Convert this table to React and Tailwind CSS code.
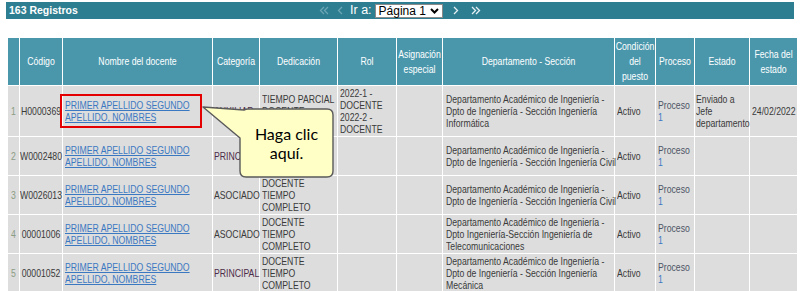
import React from "react";

const LINK = "#3b78c2";

const headers = [
  [""],
  ["Código"],
  ["Nombre del docente"],
  ["Categoría"],
  ["Dedicación"],
  ["Rol"],
  ["Asignación", "especial"],
  ["Departamento - Sección"],
  ["Condición", "del", "puesto"],
  ["Proceso"],
  ["Estado"],
  ["Fecha del", "estado"],
];

const colWidths = [
  "w-[12px]",
  "w-[43px]",
  "w-[150px]",
  "w-[47px]",
  "w-[78px]",
  "w-[59px]",
  "w-[46px]",
  "w-[172px]",
  "w-[41px]",
  "w-[39px]",
  "w-[55px]",
  "w-[48px]",
];

const DEPT = "Departamento Académico de Ingeniería -";

const rows = [
  {
    n: 1,
    code: "H0000369",
    cat: "AUXILIAR",
    catTone: true,
    ded: ["TIEMPO PARCIAL", "DOCENTE", "POR HORAS"],
    rol: ["2022-1 -", "DOCENTE", "2022-2 -", "DOCENTE"],
    dept: [DEPT, "Dpto de Ingeniería - Sección Ingeniería", "Informática"],
    estado: ["Enviado a", "Jefe", "departamento"],
    fecha: "24/02/2022",
  },
  {
    n: 2,
    code: "W0002480",
    cat: "PRINCIPAL",
    catTone: true,
    ded: ["DOCENTE", "TIEMPO", "COMPLETO"],
    rol: [],
    dept: [DEPT, "Dpto de Ingeniería - Sección Ingeniería Civil"],
    estado: [],
    fecha: "",
  },
  {
    n: 3,
    code: "W0026013",
    cat: "ASOCIADO",
    catTone: false,
    ded: ["DOCENTE", "TIEMPO", "COMPLETO"],
    rol: [],
    dept: [DEPT, "Dpto de Ingeniería - Sección Ingeniería Civil"],
    estado: [],
    fecha: "",
  },
  {
    n: 4,
    code: "00001006",
    cat: "ASOCIADO",
    catTone: false,
    ded: ["DOCENTE", "TIEMPO", "COMPLETO"],
    rol: [],
    dept: [DEPT, "Dpto Ingeniería-Sección Ingeniería de", "Telecomunicaciones"],
    estado: [],
    fecha: "",
  },
  {
    n: 5,
    code: "00001052",
    cat: "PRINCIPAL",
    catTone: true,
    ded: ["DOCENTE", "TIEMPO", "COMPLETO"],
    rol: [],
    dept: [DEPT, "Dpto de Ingeniería - Sección Ingeniería", "Mecánica"],
    estado: [],
    fecha: "",
  },
];

function Lines({ items }) {
  return items.map((t, i) => (
    <React.Fragment key={i}>
      {i > 0 && <br />}
      {t}
    </React.Fragment>
  ));
}

// The grid uses a condensed face: glyphs are narrowed horizontally.
function NarrowLeft({ children, className = "" }) {
  return (
    <span className={`block origin-left scale-x-[0.79] whitespace-nowrap ${className}`}>
      {children}
    </span>
  );
}

function NarrowCenter({ children, className = "" }) {
  return (
    <div className={`flex origin-center scale-x-[0.79] justify-center ${className}`}>
      <span className="whitespace-nowrap">{children}</span>
    </div>
  );
}

function Chevron({ dir = "left", double = false, color }) {
  const d = dir === "left" ? "M5 1 L1.5 4.5 L5 8" : "M1 1 L4.5 4.5 L1 8";
  return (
    <svg width={double ? 10 : 6} height="9" viewBox={`0 0 ${double ? 10 : 6} 9`} fill="none">
      <path d={d} stroke={color} strokeWidth="1.3" />
      {double && <path d={d} transform="translate(4 0)" stroke={color} strokeWidth="1.3" />}
    </svg>
  );
}

const td = "border border-white bg-[#dddddd] px-[2px] py-px align-middle";

export default function App() {
  return (
    <div className="relative min-h-[291px] bg-white px-[6px] pt-[2px] font-['Liberation_Sans',Arial,sans-serif] text-[11px] leading-[12px] text-[#3a3a3a]">
      {/* results bar with pager */}
      <div className="grid h-[17px] grid-cols-[1fr_auto_1fr] items-center bg-[#2e7e91] text-white">
        <span className="pl-[3px] text-[10.5px] font-bold leading-none">163 Registros</span>
        <div className="flex items-center text-[12.5px] leading-none">
          <Chevron dir="left" double color="#6aa6b6" />
          <span className="ml-[8px]">
            <Chevron dir="left" color="#6aa6b6" />
          </span>
          <span className="ml-[7px]">Ir a:</span>
          <div className="ml-[3px] flex h-[14px] items-center gap-[4px] whitespace-nowrap border border-[#8a8a8a] bg-white px-[3px] text-[12px] text-black">
            <span>Página 1</span>
            <svg width="9" height="6" viewBox="0 0 9 6" fill="none">
              <path d="M1 1 L4.5 4.5 L8 1" stroke="#000" strokeWidth="2" />
            </svg>
          </div>
          <span className="ml-[10px]">
            <Chevron dir="right" color="#e4f0f3" />
          </span>
          <span className="ml-[12px]">
            <Chevron dir="right" double color="#e4f0f3" />
          </span>
        </div>
        <span />
      </div>

      <table className="mx-px mt-[18px] w-[790px] table-fixed border-collapse">
        <colgroup>
          {colWidths.map((w, i) => (
            <col key={i} className={w} />
          ))}
        </colgroup>
        <thead>
          <tr>
            {headers.map((h, i) => (
              <th
                key={i}
                className="h-[47px] border border-white bg-[#4a97ac] px-0 py-px text-center align-middle font-normal leading-[15px] text-white"
              >
                <NarrowCenter>
                  <Lines items={h} />
                </NarrowCenter>
              </th>
            ))}
          </tr>
        </thead>
        <tbody>
          {rows.map((r) => (
            <tr key={r.n}>
              <td className={`${td} text-[#8c9c84]`}>
                <NarrowCenter>{r.n}</NarrowCenter>
              </td>
              <td className={td}>
                <NarrowCenter>{r.code}</NarrowCenter>
              </td>
              <td className={td}>
                <NarrowLeft>
                  <a href="#" className="text-[#3b78c2] underline underline-offset-1">
                    PRIMER APELLIDO SEGUNDO
                    <br />
                    APELLIDO, NOMBRES
                  </a>
                </NarrowLeft>
              </td>
              <td className={`${td} px-px`}>
                <NarrowLeft className={r.catTone ? "text-[#4d2c4a]" : ""}>{r.cat}</NarrowLeft>
              </td>
              <td className={td}>
                <NarrowLeft>
                  <Lines items={r.ded} />
                </NarrowLeft>
              </td>
              <td className={td}>
                <NarrowLeft>
                  <Lines items={r.rol} />
                </NarrowLeft>
              </td>
              <td className={td} />
              <td className={`${td} px-[3px]`}>
                <NarrowLeft>
                  <Lines items={r.dept} />
                </NarrowLeft>
              </td>
              <td className={td}>
                <NarrowLeft>Activo</NarrowLeft>
              </td>
              <td className={td}>
                <NarrowLeft className="text-[#4d5566]">
                  Proceso
                  <br />
                  <span style={{ color: LINK }}>1</span>
                </NarrowLeft>
              </td>
              <td className={`${td} px-px`}>
                <NarrowLeft>
                  <Lines items={r.estado} />
                </NarrowLeft>
              </td>
              <td className={td}>
                <NarrowLeft>{r.fecha}</NarrowLeft>
              </td>
            </tr>
          ))}
        </tbody>
      </table>

      {/* highlight around the first name link */}
      <div className="pointer-events-none absolute left-[60px] top-[94px] h-[34px] w-[142px] border-2 border-[#e40000]" />

      {/* speech bubble hint */}
      <svg className="pointer-events-none absolute left-[200px] top-[104px]" width="140" height="80" viewBox="0 0 140 80">
        <path
          d="M3 3 L44 6 Q46 5 48 5 H127 Q133 5 133 11 V67 Q133 73 127 73 H46 Q40 73 40 67 V34 Z"
          fill="#ffffc6"
          stroke="#5a5a5a"
          strokeWidth="1.4"
          strokeLinejoin="round"
        />
      </svg>
      <div className="pointer-events-none absolute left-[240px] top-[109px] flex h-[68px] w-[93px] flex-col items-center justify-center font-['Lato',sans-serif] text-[16px] leading-[19px] text-black">
        <span>Haga clic</span>
        <span>aquí.</span>
      </div>
    </div>
  );
}
